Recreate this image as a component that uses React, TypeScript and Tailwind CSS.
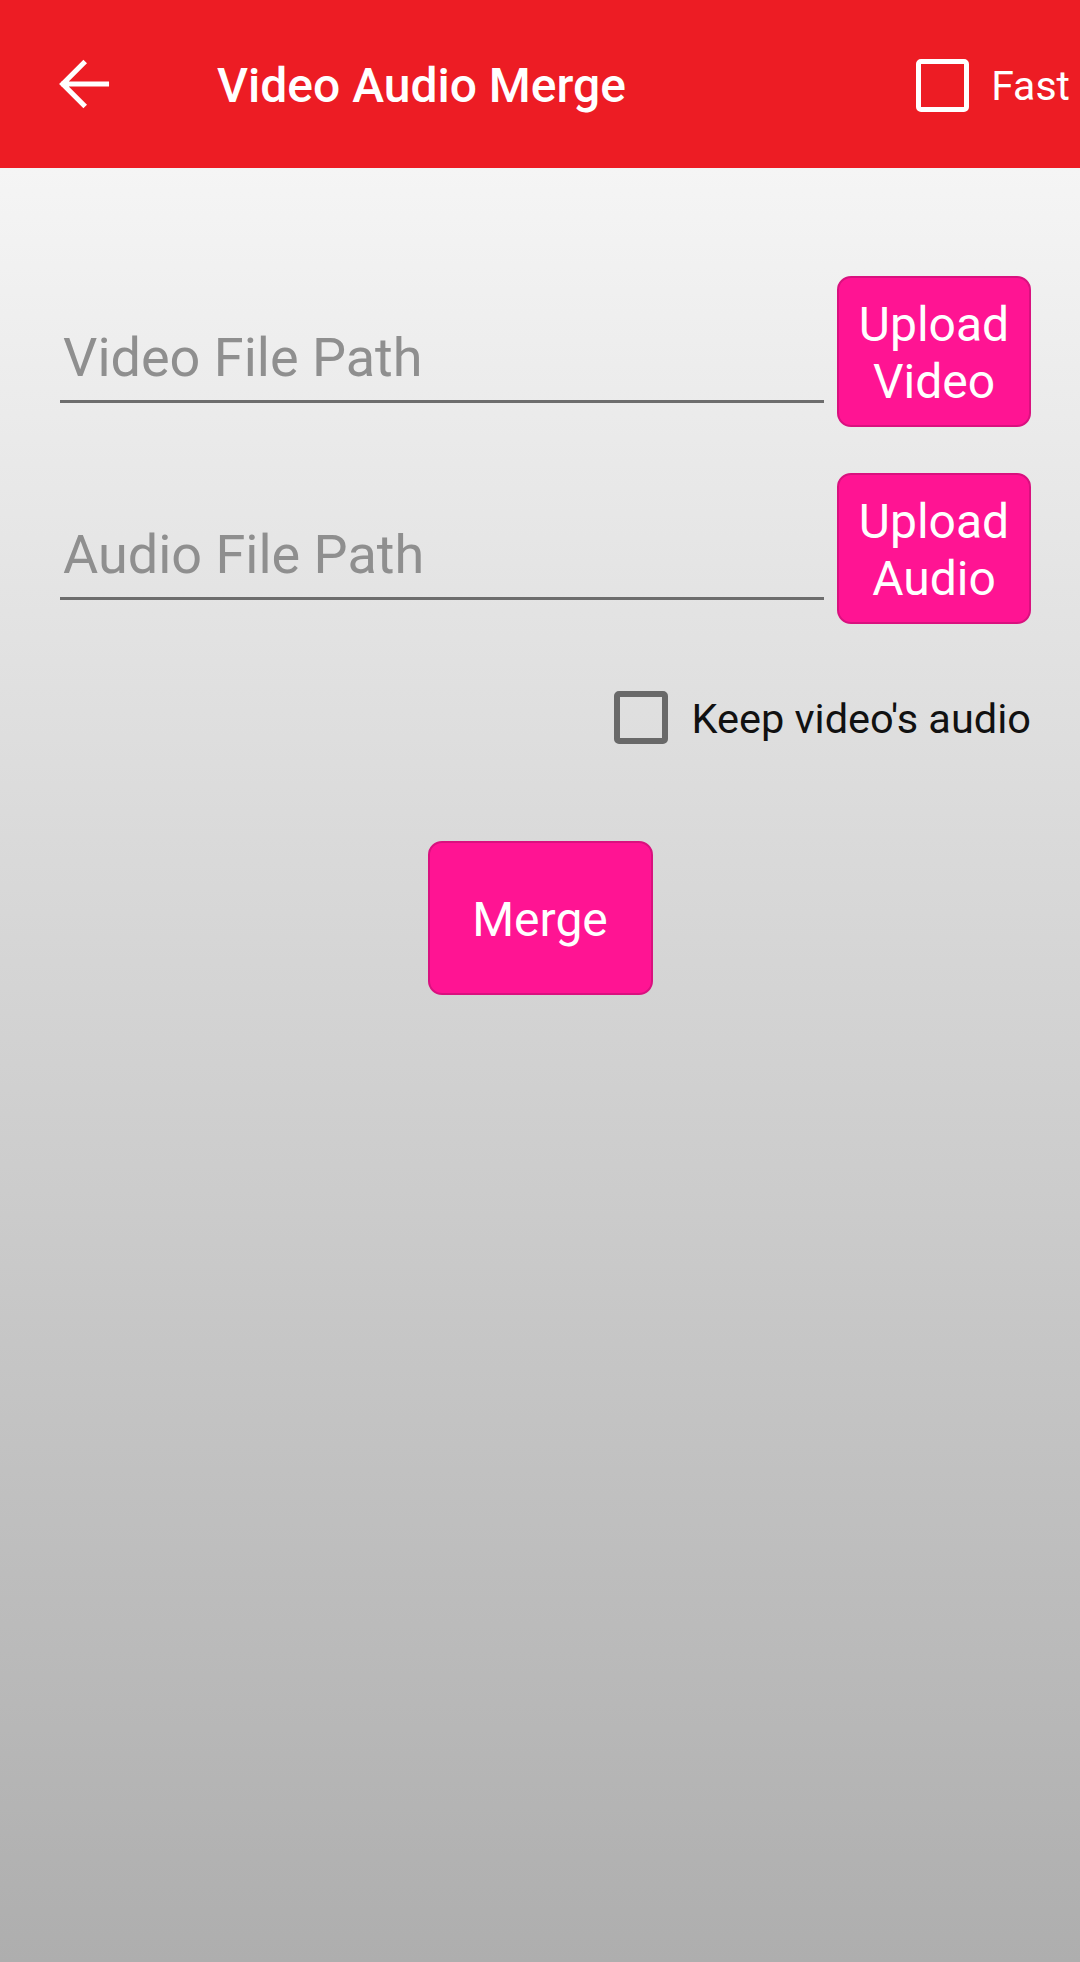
import React from "react";

function UploadRow({ placeholder, label }: { placeholder: string; label: string }) {
  return (
    <div className="flex items-start gap-[13px]">
      <div className="flex-1 self-end mb-[24px] border-b-[3px] border-[#6d6d6d] pl-[3px] pb-[11px]">
        <div className="text-[54px] leading-[63px] text-[#8f8f8f]">{placeholder}</div>
      </div>
      <button className="w-[194px] h-[151px] shrink-0 rounded-[14px] bg-[#ff1493] border-2 border-[#d9117f] text-white text-[48px] leading-[57px] pt-[3px] flex flex-col items-center justify-center">
        <span>Upload</span>
        <span>{label}</span>
      </button>
    </div>
  );
}

export default function App() {
  return (
    <div
      className="w-[1080px] h-[1962px] flex flex-col"
      style={{ fontFamily: "Roboto, 'Noto Sans', sans-serif" }}
    >
      <header className="h-[168px] shrink-0 bg-[#ed1c24] flex items-center text-white pt-[4px]">
        <div className="w-[217px] pl-[48px] flex items-center -mt-[4px]">
          <svg width="72" height="72" viewBox="0 0 24 24" fill="none">
            <path d="M19.5 12H5.2M11.8 5.1 4.9 12l6.9 6.9" stroke="white" strokeWidth="1.7" strokeLinecap="square" />
          </svg>
        </div>
        <div className="flex-1 text-[48px] font-medium leading-none">Video Audio Merge</div>
        <div className="flex items-center gap-[22px] pr-[10px] -mt-[2px]">
          <div className="w-[53px] h-[53px] border-[5px] border-white rounded-[5px]" />
          <span className="text-[41px] leading-none pt-[2px]">Fast</span>
        </div>
      </header>
      <main className="flex-1 flex flex-col pt-[108px] pl-[60px] pr-[49px] bg-gradient-to-b from-[#f5f5f5] to-[#aeaeae]">
        <UploadRow placeholder="Video File Path" label="Video" />
        <div className="h-[46px]" />
        <UploadRow placeholder="Audio File Path" label="Audio" />
        <div className="flex justify-end items-center gap-[23px] mt-[67px]">
          <div className="w-[54px] h-[53px] border-[6px] border-[#696969] rounded-[5px]" />
          <span className="text-[41.5px] leading-none text-[#111] pt-[2px]">Keep video's audio</span>
        </div>
        <div className="flex justify-center mt-[97px] pr-[11px]">
          <button className="w-[225px] h-[154px] rounded-[14px] bg-[#ff1493] border-2 border-[#d9117f] text-white text-[48px] pt-[4px]">
            Merge
          </button>
        </div>
      </main>
    </div>
  );
}
